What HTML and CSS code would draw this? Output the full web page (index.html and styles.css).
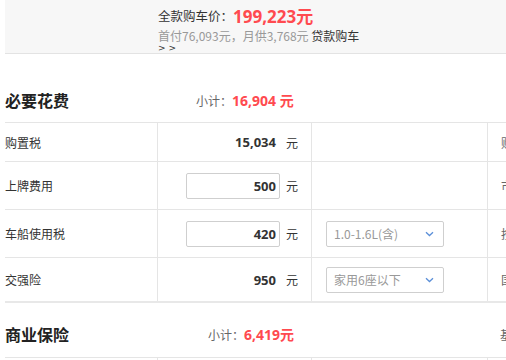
FILE: index.html
```html
<!DOCTYPE html>
<html lang="zh-CN">
<head>
<meta charset="utf-8">
<title>购车费用计算</title>
<link rel="stylesheet" href="styles.css">
</head>
<body>
<div class="page">
  <div class="summary">
    <div class="summary-body">
      <div class="total-line">
        <span class="total-label">全款购车价：</span><span class="total-price">199,223元</span>
      </div>
      <div class="loan-line">首付76,093元，月供3,768元 <a class="loan-link">贷款购车</a></div>
      <div class="loan-more">&gt; &gt;</div>
    </div>
  </div>

  <div class="sec-head">
    <h2 class="sec-title">必要花费</h2>
    <div class="subtotal">小计：<span class="sub-num">16,904 元</span></div>
    <div class="sec-extra"></div>
  </div>

  <div class="table table-first">
    <div class="row row-short">
      <div class="cell c-name">购置税</div>
      <div class="cell c-val"><span class="num num-plain">15,034</span><span class="unit">元</span></div>
      <div class="cell c-opt"></div>
      <div class="cell c-note">购置税说明</div>
    </div>
    <div class="row row-tall">
      <div class="cell c-name">上牌费用</div>
      <div class="cell c-val"><input class="num-input" type="text" value="500"><span class="unit">元</span></div>
      <div class="cell c-opt"></div>
      <div class="cell c-note">市场价格</div>
    </div>
    <div class="row row-tall">
      <div class="cell c-name">车船使用税</div>
      <div class="cell c-val"><input class="num-input" type="text" value="420"><span class="unit">元</span></div>
      <div class="cell c-opt">
        <div class="select"><span>1.0-1.6L(含)</span>
          <svg class="chev" width="9" height="6" viewBox="0 0 9 6"><path d="M1 1.2 L4.5 4.5 L8 1.2" fill="none" stroke="#5b8fd8" stroke-width="1.3"/></svg>
        </div>
      </div>
      <div class="cell c-note">按排量收取</div>
    </div>
    <div class="row row-last">
      <div class="cell c-name">交强险</div>
      <div class="cell c-val"><span class="num num-plain">950</span><span class="unit">元</span></div>
      <div class="cell c-opt">
        <div class="select"><span>家用6座以下</span>
          <svg class="chev" width="9" height="6" viewBox="0 0 9 6"><path d="M1 1.2 L4.5 4.5 L8 1.2" fill="none" stroke="#5b8fd8" stroke-width="1.3"/></svg>
        </div>
      </div>
      <div class="cell c-note">国家规定</div>
    </div>
  </div>

  <div class="sec-head sec-head-second">
    <h2 class="sec-title">商业保险</h2>
    <div class="subtotal">小计：<span class="sub-num">6,419元</span></div>
    <div class="sec-extra">基本险</div>
  </div>

  <div class="table">
    <div class="row row-tall">
      <div class="cell c-name">第三者责任险</div>
      <div class="cell c-val"></div>
      <div class="cell c-opt"></div>
      <div class="cell c-note"></div>
    </div>
  </div>
</div>
</body>
</html>
```

FILE: styles.css
```css
html, body {
  margin: 0;
  padding: 0;
  background: #fff;
  overflow: hidden;
}

body {
  font-family: "Noto Sans CJK SC", "Noto Sans", sans-serif;
  font-size: 12px;
  color: #333;
  width: 506px;
  height: 360px;
}

.page {
  padding-left: 5px;
  width: 640px;
}

/* price summary strip */
.summary {
  background: #f7f7f7;
  border-bottom: 1px solid #e3e3e3;
  width: 501px;
  height: 54px;
  box-sizing: border-box;
}

.summary-body {
  padding-left: 153px;
  padding-top: 4px;
}

.total-line {
  height: 22px;
  display: flex;
  align-items: center;
  white-space: nowrap;
}

.total-label {
  font-size: 12.5px;
  color: #333;
}

.total-price {
  font-family: "Noto Sans", "Noto Sans CJK SC", sans-serif;
  font-weight: 700;
  font-size: 17px;
  color: #ff4a4f;
}

.loan-line {
  margin-top: 3px;
  line-height: 14px;
  color: #999;
  white-space: nowrap;
}

.loan-link {
  color: #333;
}

.loan-more {
  font-family: "DejaVu Sans", sans-serif;
  font-size: 9px;
  line-height: 11px;
  color: #333;
}

/* section headers */
.sec-head {
  display: grid;
  grid-template-columns: 191px 305px 1fr;
  align-items: center;
  height: 68px;
  padding-top: 24px;
  box-sizing: border-box;
  white-space: nowrap;
}

.sec-head-second {
  grid-template-columns: 203px 292px 1fr;
  height: 55px;
  padding-top: 8px;
  border-bottom: 1px solid #e5e5e5;
}

.sec-title {
  margin: 0;
  font-size: 16px;
  font-weight: 700;
  color: #222;
  line-height: 24px;
}

.subtotal {
  color: #666;
  font-size: 12px;
}

.sub-num {
  font-family: "Noto Sans", "Noto Sans CJK SC", sans-serif;
  font-weight: 700;
  font-size: 14px;
  color: #ff4a4f;
}

.sec-extra {
  font-size: 12px;
  color: #666;
}

/* cost table */
.table {
  border-top: 1px solid #e5e5e5;
}

.table-first {
  border-bottom: 2px solid #e8e8e8;
}

.sec-head-second + .table {
  border-top: none;
}

.row {
  display: flex;
}

.row + .row {
  border-top: 1px solid #e5e5e5;
}

.row-short { height: 38px; }
.row-tall { height: 47px; }
.row-last { height: 43px; }

.cell {
  box-sizing: border-box;
  display: flex;
  align-items: center;
  white-space: nowrap;
  border-right: 1px solid #e5e5e5;
}

.c-name {
  width: 153px;
  font-size: 12px;
  color: #333;
}

.c-val {
  width: 154px;
  justify-content: flex-end;
  padding-right: 13px;
}

.c-opt {
  width: 176px;
  padding-left: 14px;
}

.c-note {
  border-right: none;
  padding-left: 13px;
  color: #666;
}

.num {
  font-family: "Noto Sans", "Noto Sans CJK SC", sans-serif;
  font-weight: 700;
  font-size: 13px;
  color: #333;
}

.num-plain {
  padding-right: 4px;
}

.unit {
  margin-left: 6px;
  width: 12px;
  color: #333;
}

.num-input {
  box-sizing: border-box;
  width: 94px;
  height: 26px;
  border: 1px solid #cfcfcf;
  border-radius: 2px;
  padding: 0 3px 0 0;
  text-align: right;
  font-family: "Noto Sans", "Noto Sans CJK SC", sans-serif;
  font-weight: 700;
  font-size: 13px;
  color: #333;
  background: #fff;
  outline: none;
}

.select {
  box-sizing: border-box;
  width: 118px;
  height: 26px;
  border: 1px solid #cfcfcf;
  border-radius: 2px;
  display: flex;
  align-items: center;
  justify-content: space-between;
  padding: 0 9px 0 7px;
  color: #999;
  font-size: 12px;
}

.chev {
  display: block;
}
```
